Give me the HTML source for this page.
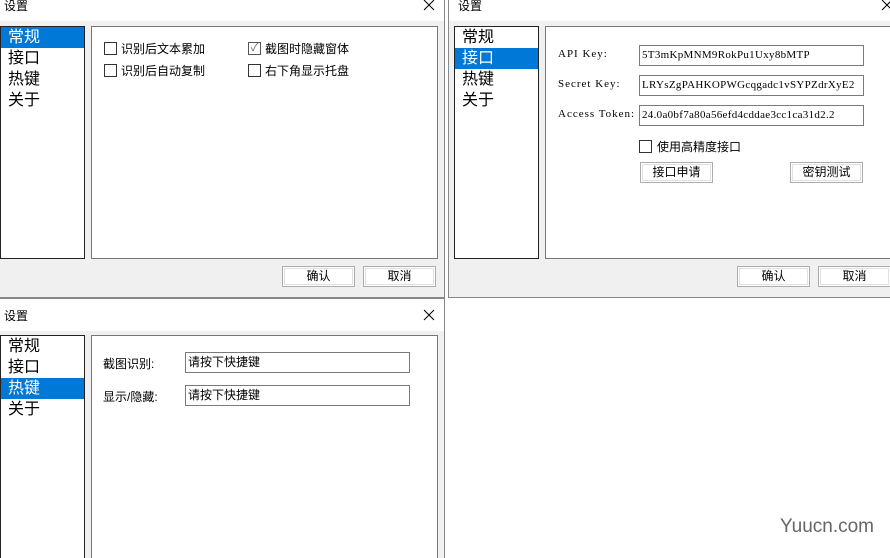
<!DOCTYPE html>
<html><head><meta charset="utf-8"><style>
*{box-sizing:border-box;margin:0;padding:0}
html,body{width:890px;height:558px;overflow:hidden}
body{position:relative;background:#fff;font-family:"Liberation Sans","Microsoft YaHei","Noto Sans CJK SC",sans-serif;font-size:12px;color:#000}
.abs{position:absolute}
.win{position:absolute;background:#f0f0f0;border:1px solid #888}
.title{position:absolute;left:0;right:0;top:0;background:#fff;font-size:12px}
.x{position:absolute;width:12px;height:12px}
.list{position:absolute;background:#fff;border:1px solid #222;font-size:16px}
.list div{height:21px;line-height:21px;padding-left:7px}
.list .sel{background:#0078d7;color:#fff}
.panel{position:absolute;background:#fff;border:1px solid #777}
.btn{position:absolute;width:73px;height:21px;border:1px solid #adadad;background:#fff;outline:1px solid #e1e1e1;outline-offset:-3px;text-align:center;line-height:19px;font-size:12px}
.cb{position:absolute;width:13px;height:13px;border:1px solid #333;background:#fff}
.lbl{position:absolute;font-size:12px;white-space:nowrap}
.inp{position:absolute;border:1px solid #7a7a7a;background:#fff;height:21px;line-height:19px;padding-left:2px;font-size:12px;white-space:nowrap;overflow:hidden}
.serif{font-family:"Liberation Serif",serif;letter-spacing:0.3px}
</style></head><body>

<!-- top-left -->
<div class="win" style="left:-1px;top:-1px;width:446px;height:299px">
 <div class="title" style="height:21px"><span class="abs" style="left:4px;top:-3px">设置</span><svg class="x" style="left:423px;top:-1px" viewBox="0 0 12 12"><path d="M1 1L11 11M11 1L1 11" stroke="#000" stroke-width="1"/></svg></div>
 <div class="list" style="left:0;top:26px;width:85px;height:233px"><div class="sel">常规</div><div>接口</div><div>热键</div><div>关于</div></div>
 <div class="panel" style="left:91px;top:26px;width:347px;height:233px">
  <div class="cb" style="left:12px;top:15px"></div><span class="lbl" style="left:29px;top:13px">识别后文本累加</span>
  <div class="cb" style="left:156px;top:15px;border-color:#555;color:#666;font-size:11px;line-height:10px;text-align:center">✓</div><span class="lbl" style="left:173px;top:13px">截图时隐藏窗体</span>
  <div class="cb" style="left:12px;top:37px"></div><span class="lbl" style="left:29px;top:35px">识别后自动复制</span>
  <div class="cb" style="left:156px;top:37px"></div><span class="lbl" style="left:173px;top:35px">右下角显示托盘</span>
 </div>
 <div class="btn" style="left:282px;top:266px">确认</div>
 <div class="btn" style="left:363px;top:266px">取消</div>
</div>

<!-- top-right -->
<div class="win" style="left:448px;top:-1px;width:444px;height:299px">
 <div class="title" style="height:21px"><span class="abs" style="left:9px;top:-3px">设置</span><svg class="x" style="left:432px;top:-1px" viewBox="0 0 12 12"><path d="M1 1L11 11M11 1L1 11" stroke="#000" stroke-width="1"/></svg></div>
 <div class="list" style="left:5px;top:26px;width:85px;height:233px"><div>常规</div><div class="sel">接口</div><div>热键</div><div>关于</div></div>
 <div class="panel" style="left:96px;top:26px;width:352px;height:233px">
  <span class="lbl serif" style="left:12px;top:21px;font-size:11px;letter-spacing:1px">API Key:</span>
  <span class="lbl serif" style="left:12px;top:51px;font-size:11px;letter-spacing:1px">Secret Key:</span>
  <span class="lbl serif" style="left:12px;top:81px;font-size:11px;letter-spacing:1px">Access Token:</span>
  <div class="inp serif" style="left:93px;top:18px;width:225px;font-size:11px">5T3mKpMNM9RokPu1Uxy8bMTP</div>
  <div class="inp serif" style="left:93px;top:48px;width:225px;font-size:11px">LRYsZgPAHKOPWGcqgadc1vSYPZdrXyE2</div>
  <div class="inp serif" style="left:93px;top:78px;width:225px;font-size:11px">24.0a0bf7a80a56efd4cddae3cc1ca31d2.2</div>
  <div class="cb" style="left:93px;top:113px"></div><span class="lbl" style="left:111px;top:111px">使用高精度接口</span>
  <div class="btn" style="left:94px;top:135px">接口申请</div>
  <div class="btn" style="left:244px;top:135px">密钥测试</div>
 </div>
 <div class="btn" style="left:288px;top:266px">确认</div>
 <div class="btn" style="left:369px;top:266px">取消</div>
</div>

<!-- bottom-left -->
<div class="win" style="left:-1px;top:298px;width:446px;height:262px">
 <div class="title" style="height:32px"><span class="abs" style="left:4px;top:8px">设置</span><svg class="x" style="left:423px;top:10px" viewBox="0 0 12 12"><path d="M1 1L11 11M11 1L1 11" stroke="#000" stroke-width="1"/></svg></div>
 <div class="list" style="left:0;top:36px;width:85px;height:240px"><div>常规</div><div>接口</div><div class="sel">热键</div><div>关于</div></div>
 <div class="panel" style="left:91px;top:36px;width:347px;height:240px">
  <span class="lbl" style="left:11px;top:19px">截图识别:</span>
  <span class="lbl" style="left:11px;top:52px">显示/隐藏:</span>
  <div class="inp" style="left:93px;top:16px;width:225px">请按下快捷键</div>
  <div class="inp" style="left:93px;top:49px;width:225px">请按下快捷键</div>
 </div>
</div>

<span class="abs" style="left:780px;top:516px;font-size:19px;color:#666;font-family:'Liberation Sans',sans-serif">Yuucn.com</span>
</body></html>
